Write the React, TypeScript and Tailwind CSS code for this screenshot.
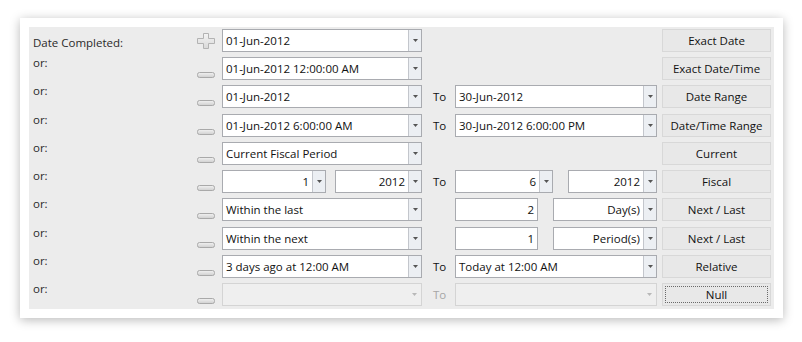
import React from "react";

const FONT = { fontFamily: '"Open Sans", "Noto Sans", "Liberation Sans", sans-serif' };

function Arrow({ disabled }: { disabled?: boolean }) {
  return (
    <svg width="5" height="3" viewBox="0 0 5 3">
      <path d="M0 0 H5 L2.5 3 Z" fill={disabled ? "#b8b8b8" : "#555"} />
    </svg>
  );
}

function Combo({
  text,
  w,
  right,
  disabled,
}: {
  text?: string;
  w: string;
  right?: boolean;
  disabled?: boolean;
}) {
  return (
    <div
      className={`${w} h-[23px] flex border ${
        disabled ? "border-[#d4d4d4] bg-[#efefef]" : "border-[#a9abb0] bg-white"
      }`}
    >
      <div
        className={`flex-1 flex items-center px-[3px] text-[11.5px] text-[#111] whitespace-nowrap overflow-hidden ${
          right ? "justify-end" : ""
        }`}
      >
        {text}
      </div>
      {disabled ? (
        <div className="w-[13px] flex items-center justify-center">
          <Arrow disabled />
        </div>
      ) : (
        <div className="w-[13px] flex items-center justify-center bg-[#eceff3] border-l border-[#c3c6cc]">
          <Arrow />
        </div>
      )}
    </div>
  );
}

function NumBox({ text, w }: { text: string; w: string }) {
  return (
    <div className={`${w} h-[23px] flex items-center justify-end px-[3px] border border-[#a9abb0] bg-white text-[11.5px] text-[#111]`}>
      {text}
    </div>
  );
}

function Btn({ label, focus }: { label: string; focus?: boolean }) {
  return (
    <div className="w-[109px] h-[23px] border border-[#d8d8d8] bg-[#e8e8e8] flex items-center justify-center text-[11.5px] text-[#111] p-[2px]">
      <div
        className={`w-full h-full flex items-center justify-center ${
          focus ? "border border-dotted border-[#6a6a6a]" : ""
        }`}
      >
        {label}
      </div>
    </div>
  );
}

function Plus() {
  return (
    <svg width="18" height="16" viewBox="0 0 18 16">
      <defs>
        <linearGradient id="pg" x1="0" y1="0" x2="0" y2="1">
          <stop offset="0" stopColor="#f4f4f4" />
          <stop offset="1" stopColor="#d9d9d9" />
        </linearGradient>
      </defs>
      <path
        d="M6.5 0.5 H11.5 V5.5 H17.5 V10.5 H11.5 V15.5 H6.5 V10.5 H0.5 V5.5 H6.5 Z"
        fill="url(#pg)"
        stroke="#b3b3b3"
        strokeLinejoin="round"
      />
    </svg>
  );
}

function Minus() {
  return (
    <svg width="18" height="6" viewBox="0 0 18 6">
      <defs>
        <linearGradient id="mg" x1="0" y1="0" x2="0" y2="1">
          <stop offset="0" stopColor="#f2f2f2" />
          <stop offset="1" stopColor="#cfcfcf" />
        </linearGradient>
      </defs>
      <rect x="0.5" y="0.5" width="17" height="5" rx="2" fill="url(#mg)" stroke="#a9a9a9" />
    </svg>
  );
}

function To({ disabled }: { disabled?: boolean }) {
  return (
    <div className={`w-[33px] pl-[11px] text-[11.5px] ${disabled ? "text-[#a6a6a6]" : "text-[#111]"}`}>
      To
    </div>
  );
}

function Row({
  first,
  h,
  children,
  button,
}: {
  first?: boolean;
  h: string;
  children: React.ReactNode;
  button: React.ReactNode;
}) {
  return (
    <div className={`${h} flex items-start`}>
      <div
        className={`w-[164px] text-[11.5px] text-[#2a2a2a] leading-[14px] ${
          first ? "pt-[7px]" : "-mt-[1px]"
        }`}
      >
        {first ? "Date Completed:" : "or:"}
      </div>
      <div className={`w-[25px] h-[23px] flex justify-start ${first ? "items-center" : "items-end pb-[2px]"}`}>
        {first ? <Plus /> : <Minus />}
      </div>
      <div className="w-[440px] flex items-center">{children}</div>
      <div>{button}</div>
    </div>
  );
}

export default function App() {
  return (
    <div className="w-[802px] h-[342px] bg-white relative" style={FONT}>
      <div className="absolute left-[20px] top-[18px] w-[763px] h-[300px] bg-white shadow-[0_2px_10px_rgba(0,0,0,0.28)] p-[9px]">
        <div className="w-full h-full bg-[#ececec] pl-[4px] pt-[2px]">
          <Row first h="h-[28px]" button={<Btn label="Exact Date" />}>
            <Combo text="01-Jun-2012" w="w-[200px]" />
          </Row>
          <Row h="h-[28px]" button={<Btn label="Exact Date/Time" />}>
            <Combo text="01-Jun-2012 12:00:00 AM" w="w-[200px]" />
          </Row>
          <Row h="h-[29px]" button={<Btn label="Date Range" />}>
            <Combo text="01-Jun-2012" w="w-[200px]" />
            <To />
            <Combo text="30-Jun-2012" w="w-[202px]" />
          </Row>
          <Row h="h-[28px]" button={<Btn label="Date/Time Range" />}>
            <Combo text="01-Jun-2012 6:00:00 AM" w="w-[200px]" />
            <To />
            <Combo text="30-Jun-2012 6:00:00 PM" w="w-[202px]" />
          </Row>
          <Row h="h-[28px]" button={<Btn label="Current" />}>
            <Combo text="Current Fiscal Period" w="w-[200px]" />
          </Row>
          <Row h="h-[28px]" button={<Btn label="Fiscal" />}>
            <Combo text="1" w="w-[104px]" right />
            <div className="w-[9px]" />
            <Combo text="2012" w="w-[87px]" right />
            <To />
            <Combo text="6" w="w-[98px]" right />
            <div className="w-[15px]" />
            <Combo text="2012" w="w-[89px]" right />
          </Row>
          <Row h="h-[29px]" button={<Btn label="Next / Last" />}>
            <Combo text="Within the last" w="w-[200px]" />
            <div className="w-[33px]" />
            <NumBox text="2" w="w-[83px]" />
            <div className="w-[15px]" />
            <Combo text="Day(s)" w="w-[104px]" right />
          </Row>
          <Row h="h-[28px]" button={<Btn label="Next / Last" />}>
            <Combo text="Within the next" w="w-[200px]" />
            <div className="w-[33px]" />
            <NumBox text="1" w="w-[83px]" />
            <div className="w-[15px]" />
            <Combo text="Period(s)" w="w-[104px]" right />
          </Row>
          <Row h="h-[28px]" button={<Btn label="Relative" />}>
            <Combo text="3 days ago at 12:00  AM" w="w-[200px]" />
            <To />
            <Combo text="Today at 12:00  AM" w="w-[202px]" />
          </Row>
          <Row h="h-[24px]" button={<Btn label="Null" focus />}>
            <Combo w="w-[200px]" disabled />
            <To disabled />
            <Combo w="w-[202px]" disabled />
          </Row>
        </div>
      </div>
    </div>
  );
}
